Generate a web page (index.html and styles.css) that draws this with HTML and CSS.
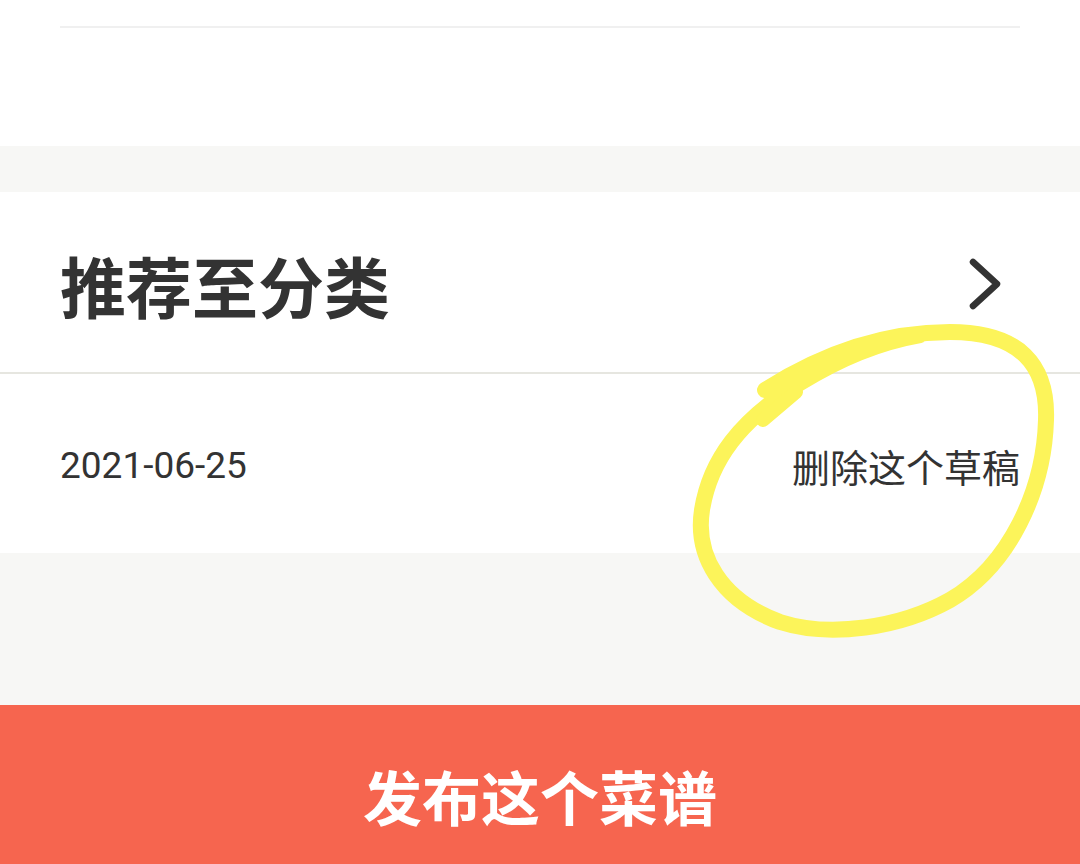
FILE: index.html
```html
<!DOCTYPE html>
<html lang="zh-CN">
<head>
<meta charset="utf-8">
<title>发布菜谱</title>
<link rel="stylesheet" href="styles.css">
</head>
<body>
<div class="page">
  <section class="top">
    <div class="top-line"></div>
  </section>
  <div class="band band-small"></div>
  <section class="category">
    <h2 class="category-title">推荐至分类</h2>
    <svg class="chevron" width="40" height="56" viewBox="0 0 40 56">
      <path d="M7 6 L31 28 L7 50" fill="none" stroke="#333" stroke-width="6.5" stroke-linecap="round" stroke-linejoin="round"/>
    </svg>
  </section>
  <div class="divider"></div>
  <section class="meta">
    <span class="date">2021-06-25</span>
    <span class="delete">删除这个草稿</span>
  </section>
  <div class="band band-large"></div>
  <button class="publish">发布这个菜谱</button>
  <svg class="marker" width="1080" height="864" viewBox="0 0 1080 864">
    <path d="M765 390 C820 355, 880 332, 950 332 C1020 332, 1048 365, 1046 420 C1044 490, 1010 565, 950 600 C900 628, 830 638, 780 622 C720 600, 695 555, 702 510 C710 460, 740 420, 800 383 C840 358, 880 342, 920 335" fill="none" stroke="#fcf45a" stroke-width="16" stroke-linecap="round" stroke-linejoin="round"/>
    <path d="M763 420 L796 392" fill="none" stroke="#fcf45a" stroke-width="14" stroke-linecap="round"/>
  </svg>
</div>
</body>
</html>
```

FILE: styles.css
```css
html, body {
  margin: 0;
  padding: 0;
  background: #ffffff;
  overflow: hidden;
}
body {
  font-family: "Noto Sans CJK SC", "Noto Sans", sans-serif;
  color: #333333;
}
.page {
  position: relative;
  width: 1080px;
  height: 864px;
  overflow: hidden;
  display: flex;
  flex-direction: column;
}
.top {
  flex: none;
  height: 146px;
  background: #ffffff;
  padding-top: 26px;
  box-sizing: border-box;
}
.top-line {
  margin: 0 60px;
  height: 2px;
  background: #f0f0f0;
}
.band {
  background: #f7f7f5;
  flex: none;
}
.band-small { height: 46px; }
.band-large { height: 152px; }
.category {
  height: 180px;
  flex: none;
  display: flex;
  align-items: center;
  justify-content: space-between;
  padding: 0 74px 0 60px;
  box-sizing: border-box;
  background: #ffffff;
}
.category-title {
  margin: 0;
  font-size: 66px;
  font-weight: 700;
  color: #333333;
  line-height: 1;
  padding-top: 4px;
}
.chevron {
  display: block;
  margin-top: 4px;
}
.divider {
  height: 2px;
  flex: none;
  background: #e6e6e0;
}
.meta {
  height: 179px;
  flex: none;
  display: flex;
  align-items: center;
  justify-content: space-between;
  padding: 0 60px;
  box-sizing: border-box;
  background: #ffffff;
}
.date {
  font-family: Roboto, "Noto Sans CJK SC", sans-serif;
  font-size: 37px;
  color: #333333;
  padding-top: 4px;
}
.delete {
  font-size: 38px;
  color: #333333;
  padding-top: 4px;
}
.publish {
  flex: none;
  height: 180px;
  width: 100%;
  border: none;
  margin: 0;
  background: #f6654f;
  color: #ffffff;
  font-family: "Noto Sans CJK SC", "Noto Sans", sans-serif;
  font-size: 59px;
  font-weight: 700;
  padding: 0;
}
.marker {
  position: absolute;
  left: 0;
  top: 0;
  pointer-events: none;
}
```
